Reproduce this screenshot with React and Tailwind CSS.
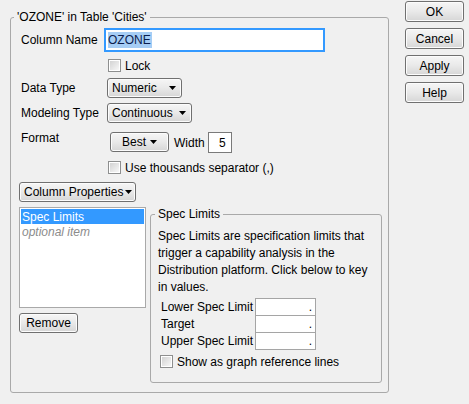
import React from "react";

const Arrow = () => (
  <svg width="7" height="4" viewBox="0 0 7 4" className="shrink-0">
    <path d="M0 0H7L3.5 4Z" fill="#000" />
  </svg>
);

const Check = () => (
  <div className="w-[13px] h-[13px] shrink-0 border border-[#8e8f8f] bg-white p-[1px]">
    <div className="w-full h-full bg-linear-to-br from-[#d3d3d3] to-[#f7f7f7]" />
  </div>
);

const btn =
  "h-[20px] shrink-0 whitespace-nowrap flex items-center border border-[#707070] rounded-[3px] bg-linear-to-b from-[#f6f6f6] via-[#e9e9e9] to-[#d6d6d6] shadow-[inset_0_0_0_1px_#fcfcfc]";

const Button = ({ children, className = "" }) => (
  <div className={`${btn} justify-center ${className}`}>{children}</div>
);

const Drop = ({ label, w }) => (
  <div className={`${btn} justify-between pl-[4px] pr-[5px] ${w}`}>
    <span>{label}</span>
    <Arrow />
  </div>
);

const Field = ({ first }) => (
  <div
    className={`w-[61px] h-[18px] border border-[#a5a5a5] bg-white flex items-center justify-end pr-[3px] ${
      first ? "" : "-mt-px"
    }`}
  >
    .
  </div>
);

export default function App() {
  return (
    <div className="w-[469px] h-[404px] bg-[#f0f0f0] flex items-start text-[12px] leading-[14px] text-black font-['Liberation_Sans',Arial,sans-serif] select-none">
      {/* main group */}
      <fieldset className="ml-[10px] mt-[10px] w-[379px] h-[383px] border border-[#a9a9a9] rounded-[3px]">
        <legend className="ml-[3px] px-[3px]">'OZONE' in Table 'Cities'</legend>
        <div className="pl-[8px] pt-[4px] flex flex-col">
          <div className="flex items-center h-[24px]">
            <span className="w-[85px] pl-[2px]">Column Name</span>
            <div className="w-[221px] h-[24px] border-2 border-[#3399ff] bg-white flex items-center pl-[2px]">
              <span className="bg-[#a6cdf5] text-[#0b1d4f] leading-[16px] pr-[1px]">OZONE</span>
            </div>
          </div>

          <div className="flex items-center gap-[4px] mt-[7px] ml-[89px] h-[13px]">
            <Check />
            <span>Lock</span>
          </div>

          <div className="flex items-center mt-[6px]">
            <span className="w-[88px] pl-[2px]">Data Type</span>
            <Drop label="Numeric" w="w-[75px]" />
          </div>

          <div className="flex items-center mt-[5px]">
            <span className="w-[88px] pl-[2px]">Modeling Type</span>
            <Drop label="Continuous" w="w-[85px]" />
          </div>

          <div className="flex items-start mt-[9px]">
            <span className="w-[91px] pl-[2px] -mt-[1px]">Format</span>
            <Button className="w-[59px] gap-[4px]">
              <span>Best</span>
              <Arrow />
            </Button>
            <span className="ml-[5px] mt-[4px]">Width</span>
            <div className="ml-[3px] w-[24px] h-[21px] border border-[#7a7a7a] bg-white flex items-center justify-end pr-[5px]">
              5
            </div>
          </div>

          <div className="flex items-center gap-[4px] mt-[8px] ml-[89px] h-[13px]">
            <Check />
            <span>Use thousands separator (,)</span>
          </div>

          <div className={`${btn} self-start mt-[8px] w-[117px] pl-[4px] pr-[3px] justify-between`}>
            <span>Column Properties</span>
            <Arrow />
          </div>

          <div className="flex items-start mt-[5px] gap-[4px]">
            <div className="flex flex-col">
              <div className="w-[127px] h-[101px] border border-[#a9a9a9] bg-white p-[1px]">
                <div className="h-[15px] bg-[#3399ff] text-white flex items-center pl-[1px]">Spec Limits</div>
                <div className="h-[15px] text-[#8c8c8c] italic flex items-center pl-[1px]">optional item</div>
              </div>
              <Button className="mt-[5px] w-[59px]">Remove</Button>
            </div>

            <fieldset className="w-[232px] h-[176px] border border-[#a9a9a9] rounded-[3px]">
              <legend className="ml-[4px] px-[3px]">Spec Limits</legend>
              <div className="pl-[7px] pt-[7px] flex flex-col">
                <div className="leading-[17px] whitespace-nowrap">
                  <div>Spec Limits are specification limits that</div>
                  <div>trigger a capability analysis in the</div>
                  <div>Distribution platform. Click below to key</div>
                  <div>in values.</div>
                </div>
                <div className="flex mt-[2px] ml-[3px]">
                  <div className="w-[94px] flex flex-col">
                    <span className="h-[17px] flex items-center">Lower Spec Limit</span>
                    <span className="h-[17px] flex items-center">Target</span>
                    <span className="h-[17px] flex items-center">Upper Spec Limit</span>
                  </div>
                  <div className="flex flex-col">
                    <Field first />
                    <Field />
                    <Field />
                  </div>
                </div>
                <div className="flex items-center gap-[4px] mt-[5px] ml-[2px] h-[13px]">
                  <Check />
                  <span>Show as graph reference lines</span>
                </div>
              </div>
            </fieldset>
          </div>
        </div>
      </fieldset>

      {/* dialog buttons */}
      <div className="ml-[16px] mt-[1px] flex flex-col gap-[6px]">
        <Button className="w-[59px] h-[21px]">OK</Button>
        <Button className="w-[59px] h-[21px]">Cancel</Button>
        <Button className="w-[59px] h-[21px]">Apply</Button>
        <Button className="w-[59px] h-[21px]">Help</Button>
      </div>
    </div>
  );
}
